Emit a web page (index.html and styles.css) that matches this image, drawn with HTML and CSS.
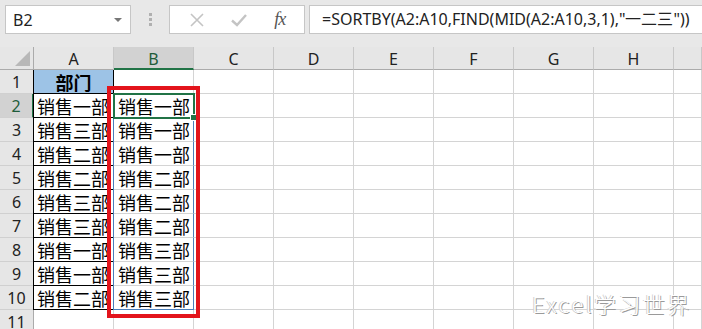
FILE: index.html
```html
<!DOCTYPE html>
<html lang="zh-CN">
<head>
  <meta charset="UTF-8" />
  <title>SORTBY</title>
  <link rel="stylesheet" href="styles.css">
</head>
<body>
  <div class="topbar">
    <div class="namebox">
      <span>B2</span>
      <span class="caret"></span>
    </div>
    <div class="grip"><i></i><i></i><i></i></div>
    <div class="fxbox">
      <svg width="16" height="16" viewBox="0 0 16 16"><path d="M2 2 L14 14 M14 2 L2 14" stroke="#c4c4c4" stroke-width="1.6" fill="none"/></svg>
      <svg width="18" height="16" viewBox="0 0 18 16"><path d="M2 8.5 L7 13 L16 3" stroke="#c4c4c4" stroke-width="2.4" fill="none"/></svg>
      <span class="fx">fx</span>
    </div>
    <div class="formula">=SORTBY(A2:A10,FIND(MID(A2:A10,3,1),"一二三"))</div>
  </div>

  <div class="sheet">
    <div class="grid">
      <div class="corner"><span class="tri"></span></div>
      <div class="ch">A</div>
      <div class="ch sel">B</div>
      <div class="ch">C</div>
      <div class="ch">D</div>
      <div class="ch">E</div>
      <div class="ch">F</div>
      <div class="ch">G</div>
      <div class="ch">H</div>
      <div class="ch"></div>

      <div class="rh">1</div>
      <div class="c a head">部门</div>
      <div class="c"></div><div class="c"></div><div class="c"></div><div class="c"></div><div class="c"></div><div class="c"></div><div class="c"></div><div class="c"></div>

      <div class="rh sel">2</div>
      <div class="c a">销售一部</div>
      <div class="c b active">销售一部</div>
      <div class="c"></div><div class="c"></div><div class="c"></div><div class="c"></div><div class="c"></div><div class="c"></div><div class="c"></div>

      <div class="rh">3</div>
      <div class="c a">销售三部</div>
      <div class="c b">销售一部</div>
      <div class="c"></div><div class="c"></div><div class="c"></div><div class="c"></div><div class="c"></div><div class="c"></div><div class="c"></div>

      <div class="rh">4</div>
      <div class="c a">销售二部</div>
      <div class="c b">销售一部</div>
      <div class="c"></div><div class="c"></div><div class="c"></div><div class="c"></div><div class="c"></div><div class="c"></div><div class="c"></div>

      <div class="rh">5</div>
      <div class="c a">销售二部</div>
      <div class="c b">销售二部</div>
      <div class="c"></div><div class="c"></div><div class="c"></div><div class="c"></div><div class="c"></div><div class="c"></div><div class="c"></div>

      <div class="rh">6</div>
      <div class="c a">销售三部</div>
      <div class="c b">销售二部</div>
      <div class="c"></div><div class="c"></div><div class="c"></div><div class="c"></div><div class="c"></div><div class="c"></div><div class="c"></div>

      <div class="rh">7</div>
      <div class="c a">销售三部</div>
      <div class="c b">销售二部</div>
      <div class="c"></div><div class="c"></div><div class="c"></div><div class="c"></div><div class="c"></div><div class="c"></div><div class="c"></div>

      <div class="rh">8</div>
      <div class="c a">销售一部</div>
      <div class="c b">销售三部</div>
      <div class="c"></div><div class="c"></div><div class="c"></div><div class="c"></div><div class="c"></div><div class="c"></div><div class="c"></div>

      <div class="rh">9</div>
      <div class="c a">销售一部</div>
      <div class="c b">销售三部</div>
      <div class="c"></div><div class="c"></div><div class="c"></div><div class="c"></div><div class="c"></div><div class="c"></div><div class="c"></div>

      <div class="rh">10</div>
      <div class="c a">销售二部</div>
      <div class="c b last">销售三部</div>
      <div class="c"></div><div class="c"></div><div class="c"></div><div class="c"></div><div class="c"></div><div class="c"></div><div class="c"></div>

      <div class="rh">11</div>
      <div class="c"></div><div class="c"></div><div class="c"></div><div class="c"></div><div class="c"></div><div class="c"></div><div class="c"></div><div class="c"></div><div class="c"></div>
    </div>

    <div class="mark"></div>
    <div class="watermark">Excel学习世界</div>
  </div>
</body>
</html>
```

FILE: styles.css
```css
body {
  margin: 0;
  width: 702px;
  height: 329px;
  overflow: hidden;
  background: #e8e8e8;
  font-family: "Noto Sans", "Open Sans", sans-serif;
}

.topbar {
  display: flex;
  align-items: flex-start;
  height: 47px;
  padding: 5px 0 0 5px;
  box-sizing: border-box;
}

.namebox {
  display: flex;
  align-items: center;
  justify-content: space-between;
  width: 126px;
  height: 29px;
  padding: 0 8px 0 7px;
  box-sizing: border-box;
  background: #fff;
  border: 1px solid #c6c6c6;
  font-size: 16px;
  color: #222;
}

.caret {
  width: 0;
  height: 0;
  border-left: 4px solid transparent;
  border-right: 4px solid transparent;
  border-top: 4px solid #777;
}

.grip {
  display: flex;
  flex-direction: column;
  gap: 2px;
  width: 38px;
  align-items: center;
  padding-top: 8px;
}

.grip i {
  width: 3px;
  height: 3px;
  background: #b0b0b0;
}

.fxbox {
  display: flex;
  align-items: center;
  justify-content: space-around;
  width: 136px;
  height: 29px;
  box-sizing: border-box;
  background: #fff;
  border: 1px solid #c6c6c6;
  padding: 0 6px;
}

.fx {
  font-family: "Liberation Serif", serif;
  font-style: italic;
  font-size: 18px;
  color: #555;
  letter-spacing: -1px;
}

.formula {
  flex: 1;
  height: 29px;
  margin-left: 4px;
  padding-left: 12px;
  box-sizing: border-box;
  background: #fff;
  border: 1px solid #c6c6c6;
  border-right: none;
  font-size: 16px;
  line-height: 26px;
  color: #222;
  white-space: nowrap;
  overflow: hidden;
}

.sheet {
  position: relative;
}

.grid {
  display: grid;
  grid-template-columns: 34px repeat(8, 80px) 1fr;
  grid-template-rows: 23px;
  grid-auto-rows: 24px;
  background: #fff;
}

.corner {
  position: relative;
  background: #e6e6e6;
  border-right: 1px solid #ababab;
  border-bottom: 1px solid #ababab;
}

.tri {
  position: absolute;
  right: 3px;
  bottom: 3px;
  width: 0;
  height: 0;
  border-left: 15px solid transparent;
  border-bottom: 15px solid #b8b8b8;
}

.ch {
  background: #e6e6e6;
  border-right: 1px solid #c8c8c8;
  border-bottom: 1px solid #ababab;
  text-align: center;
  font-size: 16px;
  line-height: 24px;
  color: #222;
}

.ch.sel {
  background: #d2d2d2;
  color: #1e5c3a;
  border-bottom: 2px solid #217346;
}

.rh {
  background: #e6e6e6;
  border-right: 1px solid #ababab;
  border-bottom: 1px solid #d0d0d0;
  text-align: center;
  font-size: 16px;
  line-height: 24px;
  color: #222;
}

.rh.sel {
  background: #d2d2d2;
  color: #1e5c3a;
  border-right: 2px solid #217346;
}

.c {
  border-right: 1px solid #d4d4d4;
  border-bottom: 1px solid #d4d4d4;
  padding-left: 3px;
  font-family: "Noto Sans CJK SC", sans-serif;
  font-size: 18px;
  line-height: 24px;
  color: #000;
  white-space: nowrap;
  overflow: hidden;
}

.c.a {
  border-right-color: #000;
  border-bottom-color: #000;
  box-shadow: -1px 0 0 #000;
}

.c.head {
  background: #9dc3e6;
  font-weight: bold;
  text-align: center;
  padding-left: 0;
}

.c.b {
  padding-left: 4px;
  border-right-color: #4a7ebb;
  box-shadow: -1px 0 0 #4a7ebb;
}

.c.b.last {
  border-bottom-color: #4a7ebb;
}

.c.active {
  position: relative;
  overflow: visible;
  z-index: 2;
  outline: 2px solid #217346;
  outline-offset: -1px;
}

.c.active::after {
  content: "";
  position: absolute;
  right: -4px;
  bottom: -4px;
  width: 5px;
  height: 5px;
  background: #217346;
  border: 1px solid #fff;
}

.mark {
  position: absolute;
  left: 107px;
  top: 39px;
  width: 93px;
  height: 232px;
  box-sizing: border-box;
  border: 4px solid #e3141c;
  z-index: 3;
}

.watermark {
  position: absolute;
  left: 532px;
  top: 240px;
  font-family: "Noto Sans CJK SC", sans-serif;
  font-size: 22px;
  font-weight: 300;
  letter-spacing: 2.4px;
  color: #fff;
  text-shadow: 1px 1px 0 #9a9a9a, -1px 0 0 #d0d0d0;
  z-index: 4;
}
```
